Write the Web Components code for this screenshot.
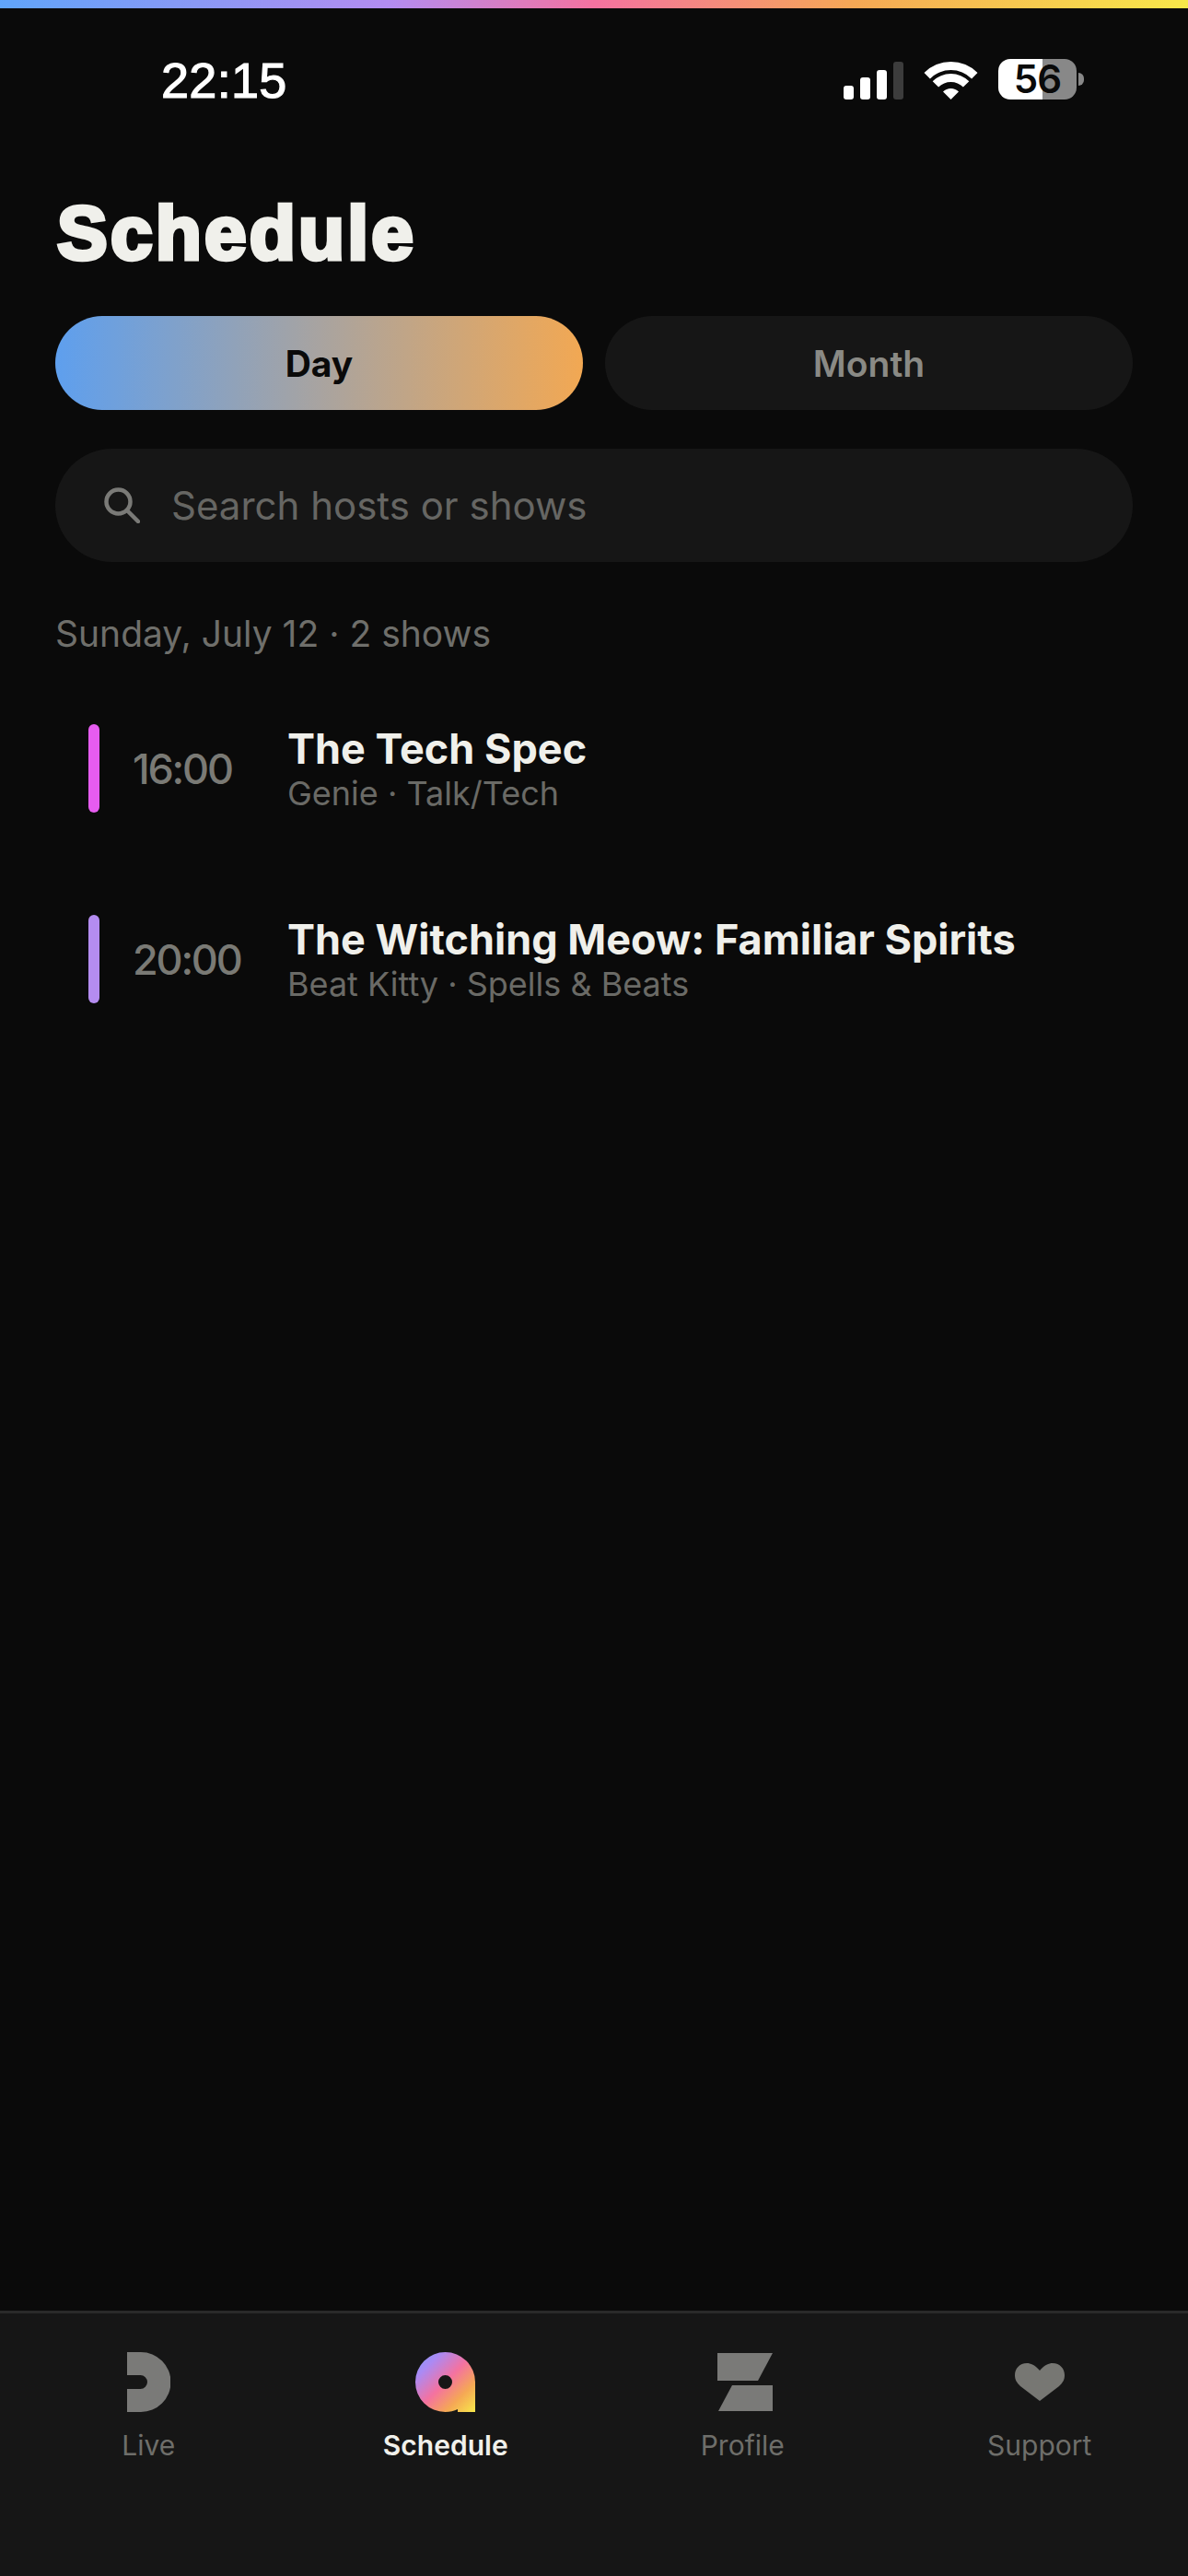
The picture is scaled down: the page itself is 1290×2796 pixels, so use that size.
<!DOCTYPE html>
<html lang="en"><head><meta charset="utf-8"><title>Schedule</title>
<style>
html,body{margin:0;padding:0;background:#0a0a0a}
body{font-family:Inter,"Liberation Sans",sans-serif}
</style></head><body>
<app-shell>
  <status-bar></status-bar>
  <main-title>Schedule</main-title>
  <seg-tabs></seg-tabs>
  <search-box></search-box>
  <date-label>Sunday, July 12 · 2 shows</date-label>
  <show-row time="16:00" title="The Tech Spec" sub="Genie · Talk/Tech" color="#e65cf0"></show-row>
  <show-row time="20:00" title="The Witching Meow: Familiar Spirits" sub="Beat Kitty · Spells &amp; Beats" color="#b48cf0"></show-row>
  <bottom-nav></bottom-nav>
</app-shell>
<script>
function def(name, css, html){
  customElements.define(name, class extends HTMLElement{
    connectedCallback(){
      if(this.shadowRoot) return;
      const r=this.attachShadow({mode:'open'});
      const h=typeof html==='function'?html(this):html;
      r.innerHTML='<style>'+css+'</style>'+h;
    }
  });
}
def('app-shell',`
:host{display:flex;flex-direction:column;width:1290px;height:2796px;background:#0a0a0a;color:#f0f0eb;overflow:hidden}
.rainbow{height:9px;flex:none;background:linear-gradient(90deg,#60a5fa 0%,#b48cf0 33%,#f472a0 50%,#f5a855 72%,#f8e84a 100%)}
.body{flex:1;display:flex;flex-direction:column;min-height:0}
`,`<div class="rainbow"></div><div class="body"><slot></slot></div>`);

def('status-bar',`
:host{display:flex;flex:none;height:114px;align-items:flex-end;justify-content:space-between;padding:0 113px 0 175px;box-sizing:border-box}
.time{font:400 54px/62px "Liberation Sans",sans-serif;letter-spacing:.3px;-webkit-text-stroke:1.2px #fff;color:#fff;margin-bottom:5px}
.right{display:flex;align-items:flex-end;margin-bottom:15px}
.bars{display:flex;align-items:flex-end;gap:7px;height:41px;margin-right:23px}
.bars i{display:block;width:11px;border-radius:3px;background:#fff}
.wifi{display:block;margin-right:23px}
.batt{display:flex;align-items:center}
.shell{width:85px;height:44px;border-radius:13px;background:linear-gradient(90deg,#fff 56.5%,#888 56.5%);display:flex;align-items:center;justify-content:center;color:#0a0a0a;font:600 42px/44px Inter,sans-serif;letter-spacing:-1px}
.nub{width:6px;height:14px;margin-left:2px;border-radius:0 7px 7px 0;background:#888}
`,`<div class="time">22:15</div>
<div class="right">
  <div class="bars"><i style="height:15px"></i><i style="height:24px"></i><i style="height:32px"></i><i style="height:41px;background:#3c3c3c"></i></div>
  <svg class="wifi" width="57" height="41" viewBox="0 0 57 41" fill="#fff" style="overflow:visible"><path d="M-.5 12A41 41 0 0 1 57.500 12L51.100 18.400A32 32 0 0 0 5.900 18.400Z"/><path d="M8.700 21.200A28 28 0 0 1 48.300 21.200L41.900 27.600A19 19 0 0 0 15.100 27.600Z"/><path d="M28.500 41L20 32.500A12 12 0 0 1 37 32.500Z"/></svg>
  <div class="batt"><div class="shell">56</div><div class="nub"></div></div>
</div>`);

def('main-title',`
:host{display:block;flex:none;margin:80px 0 0 62px;height:140px}
h1{margin:0;font:700 82px/100px "Liberation Sans",sans-serif;color:#f0f0eb;letter-spacing:3.200px;-webkit-text-stroke:4.500px #f0f0eb}
`,`<h1><slot></slot></h1>`);

def('seg-tabs',`
:host{display:flex;flex:none;gap:24px;padding:0 60px}
div{flex:1;height:102px;border-radius:51px;display:flex;align-items:center;justify-content:center;font:600 39px/1 Inter,sans-serif;background:#161616;color:#8a8a85}
.on{background:linear-gradient(90deg,#5e9fee,#f2a853);color:#0a0a0a;font-weight:700}
`,`<div class="on">Day</div><div>Month</div>`);

def('search-box',`
:host{display:flex;flex:none;align-items:center;margin:42px 60px 0;height:123px;border-radius:62px;background:#161616;padding-left:53px;box-sizing:border-box}
svg{display:block;margin-right:34px}
span{font:400 42px/1 Inter,sans-serif;color:#666663}
`,`<svg width="39" height="39" viewBox="0 0 39 39" fill="none" stroke="#7a7a77" stroke-width="4.500" stroke-linecap="round"><circle cx="15.500" cy="15.500" r="13"/><path d="M25 25L37 37"/></svg><span>Search hosts or shows</span>`);

def('date-label',`
:host{display:block;flex:none;margin:53px 60px 0;font:400 39px/50px Inter,sans-serif;color:#6f6f6b}
`,`<slot></slot>`);

def('show-row',`
:host{display:flex;flex:none;align-items:center;height:96px;margin:73px 0 38px 96px}
.bar{width:12px;height:96px;border-radius:6px;margin-right:36px}
.t{width:126px;margin-right:42px;font:500 45px/1 Inter,sans-serif;letter-spacing:-2.200px;color:#7a7a75;white-space:nowrap}
.ti{font:700 45px/54px Inter,sans-serif;color:#f0f0eb}
.s{font:400 36px/42px Inter,sans-serif;color:#6a6a66}
`,(el)=>{
 const e=s=>String(s).replace(/&/g,'&amp;');
 return `<div class="bar" style="background:${el.getAttribute('color')}"></div><div class="t">${e(el.getAttribute('time'))}</div><div><div class="ti">${e(el.getAttribute('title'))}</div><div class="s">${e(el.getAttribute('sub'))}</div></div>`;
});

def('bottom-nav',`
:host{display:grid;grid-template-columns:repeat(4,1fr);margin-top:auto;flex:none;height:288px;background:#161616;border-top:3px solid #2a2a2a;box-sizing:border-box}
.i{display:flex;flex-direction:column;align-items:center;padding-top:42px;font:400 30px/36px Inter,sans-serif;color:#6e6e6a}
.ic{height:65px;display:flex;align-items:center;justify-content:center;margin-bottom:18px}
svg{display:block}
.pf{margin-left:6px}
.on{color:#f0f0eb;font-weight:600}
`,`
<div class="i"><div class="ic"><svg width="47" height="65" viewBox="0 0 47 65" fill="#7a7a78"><path d="M0 0H15A32.500 32.500 0 0 1 15 65H0V40H14.500A7.500 7.500 0 0 0 14.500 25H0Z"/></svg></div>Live</div>
<div class="i on"><div class="ic"><svg width="65" height="65" viewBox="0 0 65 65"><defs><linearGradient id="g" gradientUnits="userSpaceOnUse" x1="0" y1="0" x2="65" y2="65"><stop offset="0" stop-color="#7f9cf8"/><stop offset=".22" stop-color="#ab8af4"/><stop offset=".5" stop-color="#f472a0"/><stop offset=".75" stop-color="#f5a855"/><stop offset="1" stop-color="#f8e84a"/></linearGradient></defs><path fill="url(#g)" fill-rule="evenodd" d="M65 32.500V65H46V62Q40 65 32.500 65A32.500 32.500 0 1 1 65 32.500ZM32.500 25A7.500 7.500 0 1 0 32.500 40A7.500 7.500 0 1 0 32.500 25Z"/></svg></div>Schedule</div>
<div class="i"><div class="ic pf"><svg width="60" height="63" viewBox="0 0 60 63" fill="#7a7a78"><path d="M0 0H60L44 30H0Z"/><path d="M16 35H60V63H1Z"/></svg></div>Profile</div>
<div class="i"><div class="ic"><svg width="54" height="41" viewBox="0 0 54 41" fill="#777773"><path d="M27 8C22 2 17 0 13 0C5 0 0 6 0 13C0 18 2 21 6 25L27 41L48 25C52 21 54 18 54 13C54 6 49 0 41 0C37 0 32 2 27 8Z"/></svg></div>Support</div>`);
</script>
</body></html>
